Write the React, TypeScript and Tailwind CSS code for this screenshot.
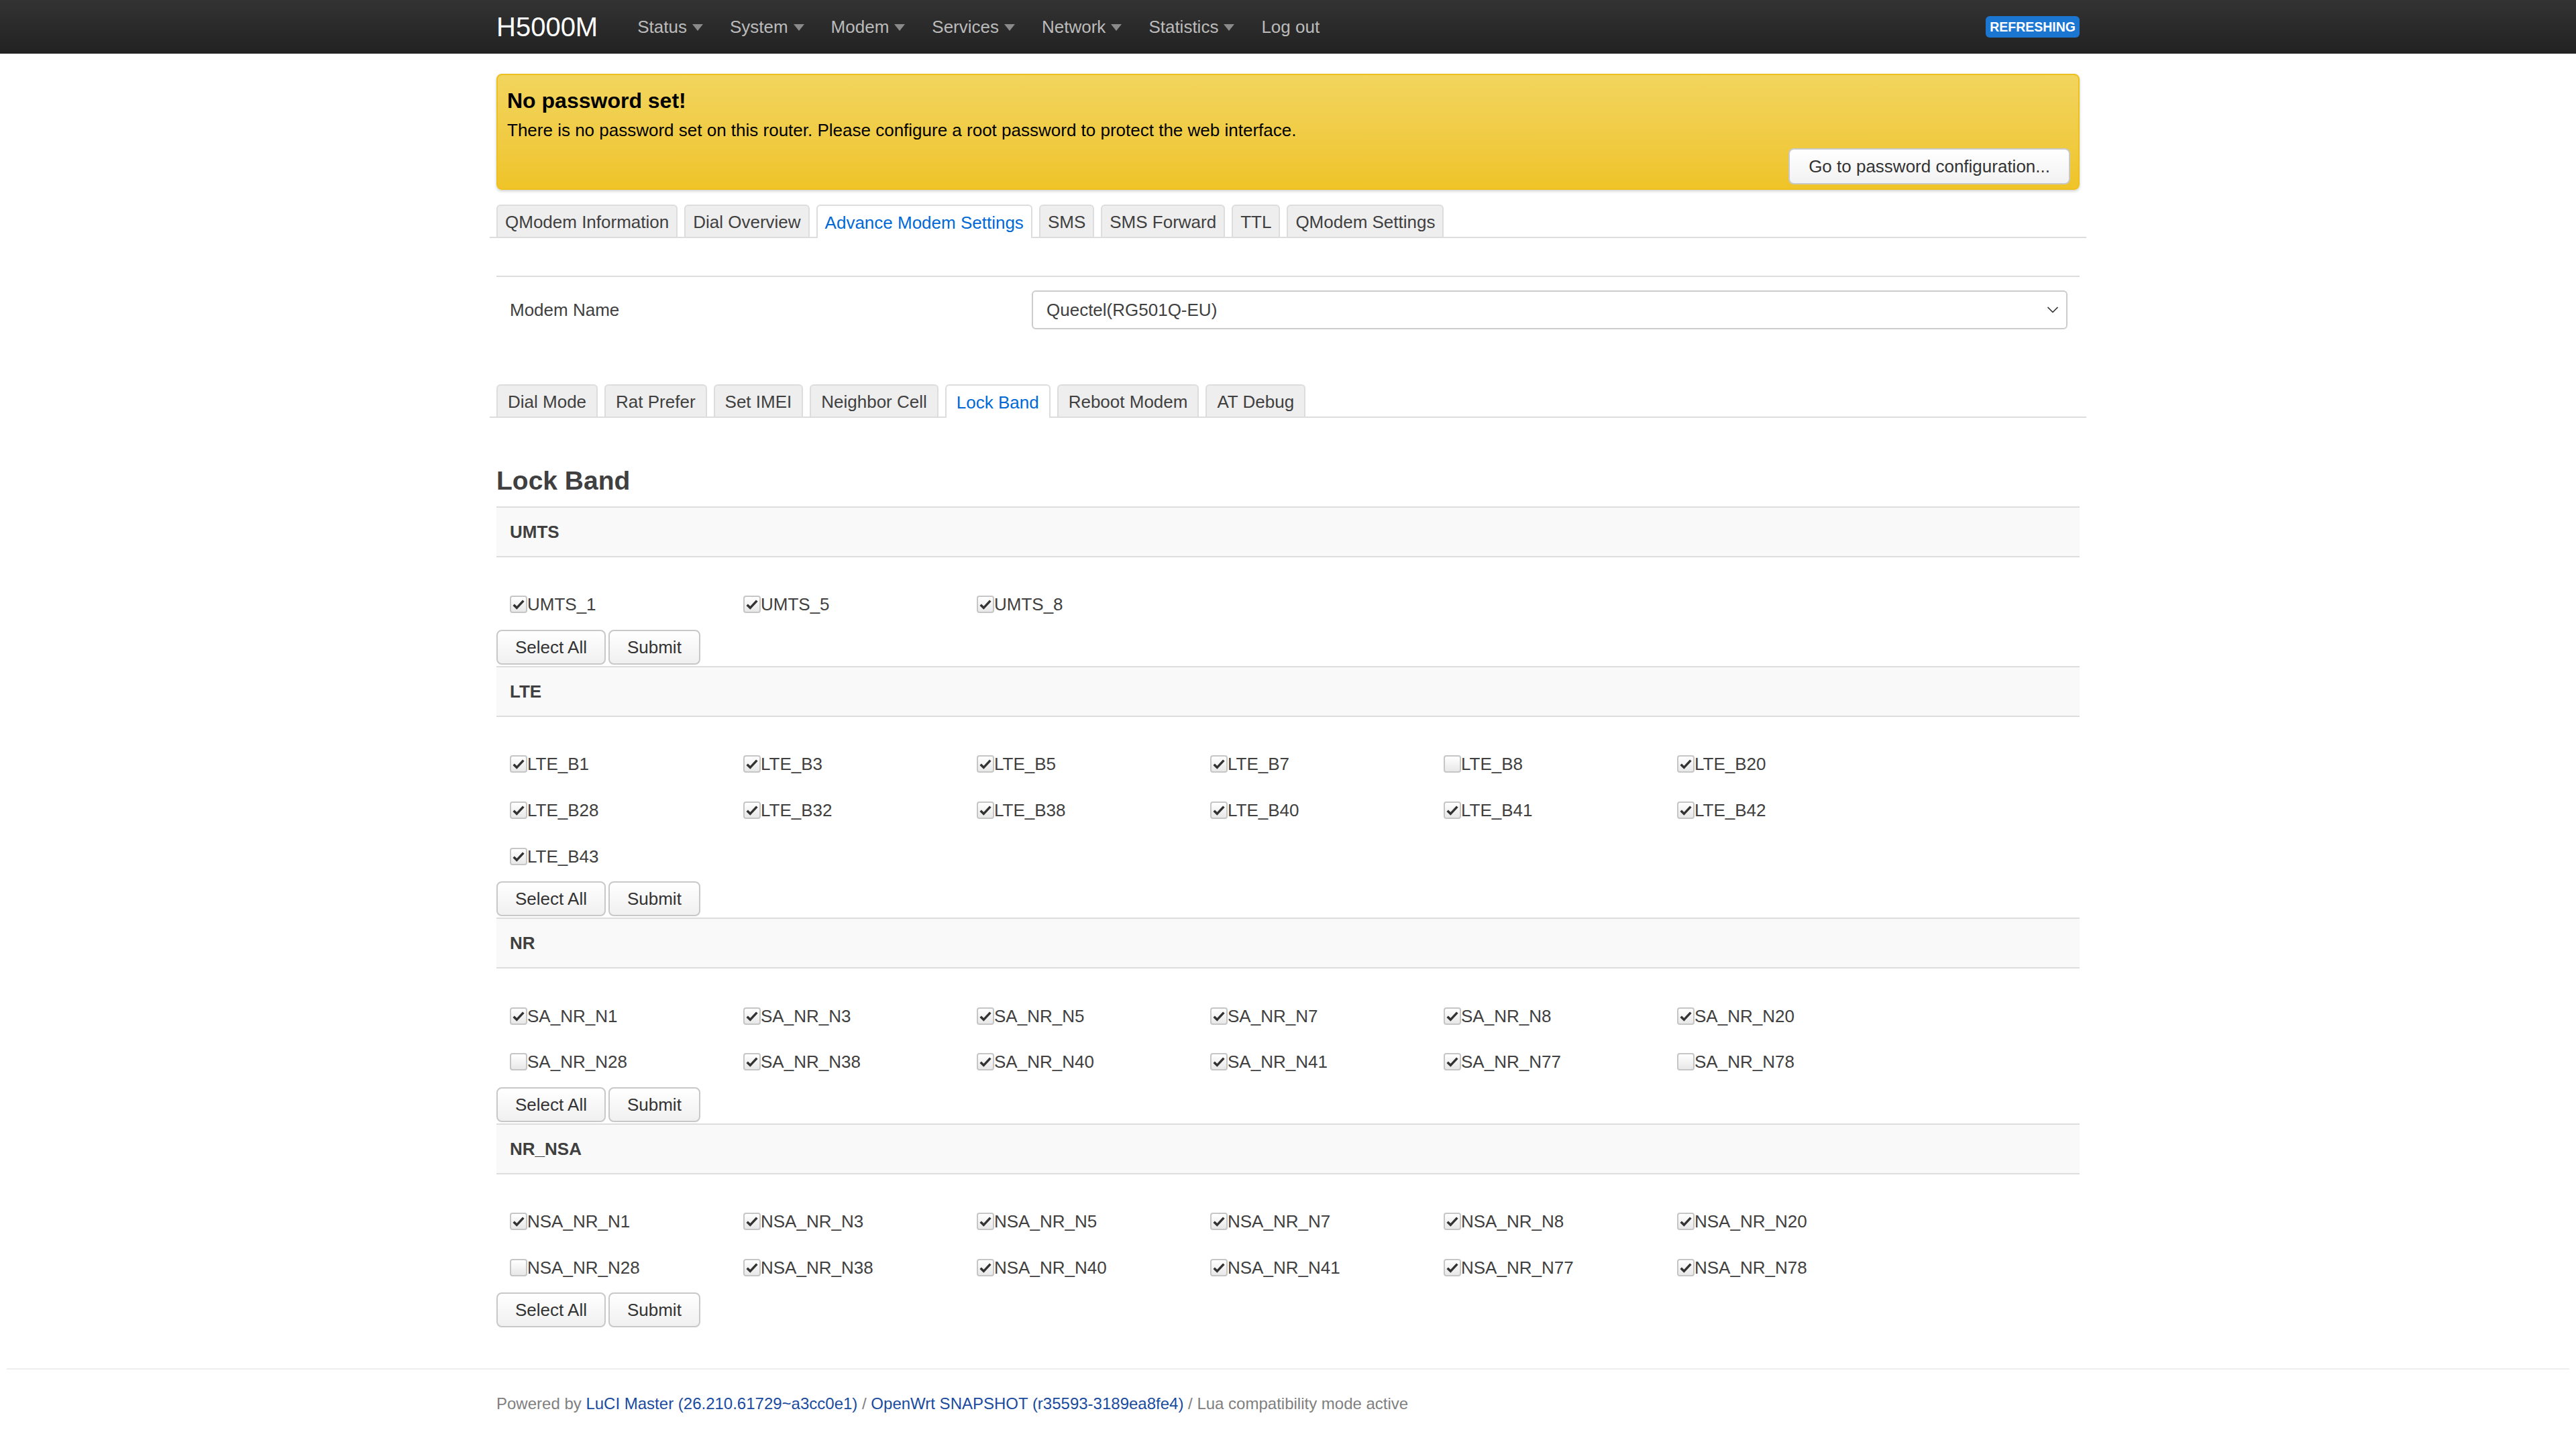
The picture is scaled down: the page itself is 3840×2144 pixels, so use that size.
import React from 'react';
import { ChevronDown } from 'lucide-react';

type Band = { name: string; on: boolean };

const bands = (names: string, off: string[] = []): Band[] =>
  names.split(' ').map((name) => ({ name, on: !off.includes(name) }));

const sections: { title: string; items: Band[] }[] = [
  { title: 'UMTS', items: bands('UMTS_1 UMTS_5 UMTS_8') },
  {
    title: 'LTE',
    items: bands('LTE_B1 LTE_B3 LTE_B5 LTE_B7 LTE_B8 LTE_B20 LTE_B28 LTE_B32 LTE_B38 LTE_B40 LTE_B41 LTE_B42 LTE_B43', ['LTE_B8']),
  },
  {
    title: 'NR',
    items: bands('SA_NR_N1 SA_NR_N3 SA_NR_N5 SA_NR_N7 SA_NR_N8 SA_NR_N20 SA_NR_N28 SA_NR_N38 SA_NR_N40 SA_NR_N41 SA_NR_N77 SA_NR_N78', ['SA_NR_N28', 'SA_NR_N78']),
  },
  {
    title: 'NR_NSA',
    items: bands('NSA_NR_N1 NSA_NR_N3 NSA_NR_N5 NSA_NR_N7 NSA_NR_N8 NSA_NR_N20 NSA_NR_N28 NSA_NR_N38 NSA_NR_N40 NSA_NR_N41 NSA_NR_N77 NSA_NR_N78', ['NSA_NR_N28']),
  },
];

const menu = [
  { label: 'Status', drop: true },
  { label: 'System', drop: true },
  { label: 'Modem', drop: true },
  { label: 'Services', drop: true },
  { label: 'Network', drop: true },
  { label: 'Statistics', drop: true },
  { label: 'Log out', drop: false },
];

const mainTabs = ['QModem Information', 'Dial Overview', 'Advance Modem Settings', 'SMS', 'SMS Forward', 'TTL', 'QModem Settings'];
const subTabs = ['Dial Mode', 'Rat Prefer', 'Set IMEI', 'Neighbor Cell', 'Lock Band', 'Reboot Modem', 'AT Debug'];

const Checkbox: React.FC<{ on: boolean }> = ({ on }) => (
  <span className="w-[13px] h-[13px] shrink-0 flex items-center justify-center border border-[#c6c6c6] rounded-[2px] bg-linear-to-b from-white to-[#e8e8e8]">
    {on && (
      <svg viewBox="0 0 12 12" className="w-[10px] h-[10px]">
        <path d="M1.6 6.4l2.8 2.8L10.4 2.8" fill="none" stroke="#333" strokeWidth="2.1" />
      </svg>
    )}
  </span>
);

const Button: React.FC<{ children: React.ReactNode }> = ({ children }) => (
  <button className="h-[26px] px-[13px] border border-[#c8c8c8] rounded-[4px] bg-linear-to-b from-white to-[#f0f0f0] text-[13px] text-[#333] leading-none">
    {children}
  </button>
);

const Tabs: React.FC<{ tabs: string[]; active: string; pad: string }> = ({ tabs, active, pad }) => (
  <ul className="flex items-end gap-[5px] -mx-[5px] px-[5px] border-b border-[#dddddd]">
    {tabs.map((t) => (
      <li
        key={t}
        className={`-mb-px flex items-center pt-[1px] ${pad} border border-b-0 rounded-t-[3px] ${
          t === active ? 'bg-white border-[#dddddd] text-[#0069d6] h-[25px]' : 'bg-[#eeeeee] border-[#dddddd] text-[#404040] h-[24px] mb-0'
        }`}
      >
        {t}
      </li>
    ))}
  </ul>
);

export default function App() {
  return (
    <div className="[zoom:2] w-[1920px] min-h-[1072px] bg-white text-[13px] leading-[18px] text-[#404040] font-['Liberation_Sans',Arial,sans-serif]">
      {/* top bar */}
      <header className="h-[40px] bg-linear-to-b from-[#333333] to-[#222222]">
        <div className="w-[1180px] mx-auto h-full flex items-center">
          <span className="text-[20px] text-white pr-[19.5px]">H5000M</span>
          <nav className="flex items-center">
            {menu.map((m) => (
              <a key={m.label} className="px-[10px] flex items-center text-[#bbbbbb]">
                {m.label}
                {m.drop && (
                  <span className="ml-[4px] mt-[1px] w-0 h-0 border-x-[4px] border-x-transparent border-t-[5px] border-t-[#8a8a8a]" />
                )}
              </a>
            ))}
          </nav>
          <span className="ml-auto h-[16px] px-[3px] flex items-center rounded-[3px] bg-[#1b76d2] text-white text-[9.75px] font-bold uppercase">
            Refreshing
          </span>
        </div>
      </header>

      <main className="w-[1180px] mx-auto">
        {/* warning */}
        <div className="mt-[15px] border border-[#edc01f] rounded-[4px] bg-linear-to-b from-[#f2d55d] to-[#efc427] shadow-[0_1px_2px_rgba(0,0,0,0.2)] pt-[8px] pb-[3px] pl-[7px] pr-[6px] text-black">
          <h4 className="text-[16px] font-bold leading-[22px]">No password set!</h4>
          <p className="mt-[2px] leading-[18px]">
            There is no password set on this router. Please configure a root password to protect the web interface.
          </p>
          <div className="flex justify-end mt-[4.5px]">
            <button className="h-[27px] px-[14px] border border-[#c8c8c8] rounded-[4px] bg-linear-to-b from-white to-[#f2f2f2] text-[13px] text-[#333]">
              Go to password configuration...
            </button>
          </div>
        </div>

        <div className="mt-[11px]">
          <Tabs tabs={mainTabs} active="Advance Modem Settings" pad="px-[5.5px]" />
        </div>

        {/* modem selector */}
        <div className="mt-[28px] border-t border-[#dddddd] pt-[10px] pl-[10px] pr-[9px] flex items-center">
          <label className="w-[389px]">Modem Name</label>
          <div className="flex-1 h-[29px] border border-[#cccccc] rounded-[3px] bg-white flex items-center justify-between pl-[10px] pr-[3px]">
            <span>Quectel(RG501Q-EU)</span>
            <ChevronDown size={14} strokeWidth={1.5} className="text-[#333]" />
          </div>
        </div>

        <div className="mt-[41px]">
          <Tabs tabs={subTabs} active="Lock Band" pad="px-[7.5px]" />
        </div>

        <h3 className="mt-[33.5px] text-[19.5px] font-bold leading-[27px]">Lock Band</h3>

        <div className="mt-[5.5px]">
          {sections.map((s) => (
            <section key={s.title} className="mb-[1px]">
              <div className="h-[38px] px-[10px] flex items-center bg-[#f9f9f9] border-y border-[#dddddd] font-bold">
                {s.title}
              </div>
              <div className="pt-[18px] px-[10px] grid grid-cols-[repeat(6,174px)]">
                {s.items.map((b) => (
                  <label key={b.name} className="h-[34.4px] flex items-center">
                    <Checkbox on={b.on} />
                    <span>{b.name}</span>
                  </label>
                ))}
              </div>
              <div className="mt-[1.5px] flex gap-[2px]">
                <Button>Select All</Button>
                <Button>Submit</Button>
              </div>
            </section>
          ))}
        </div>
      </main>

      <footer className="mt-[30.5px]">
        <hr className="mx-[5px] border-0 border-t border-[#eeeeee]" />
        <div className="w-[1180px] mx-auto mt-[16.5px] pb-[18px] text-[12px] text-[#808080]">
          Powered by <a className="text-[#1a4ba0]">LuCI Master (26.210.61729~a3cc0e1)</a> /{' '}
          <a className="text-[#1a4ba0]">OpenWrt SNAPSHOT (r35593-3189ea8fe4)</a> / Lua compatibility mode active
        </div>
      </footer>
    </div>
  );
}
